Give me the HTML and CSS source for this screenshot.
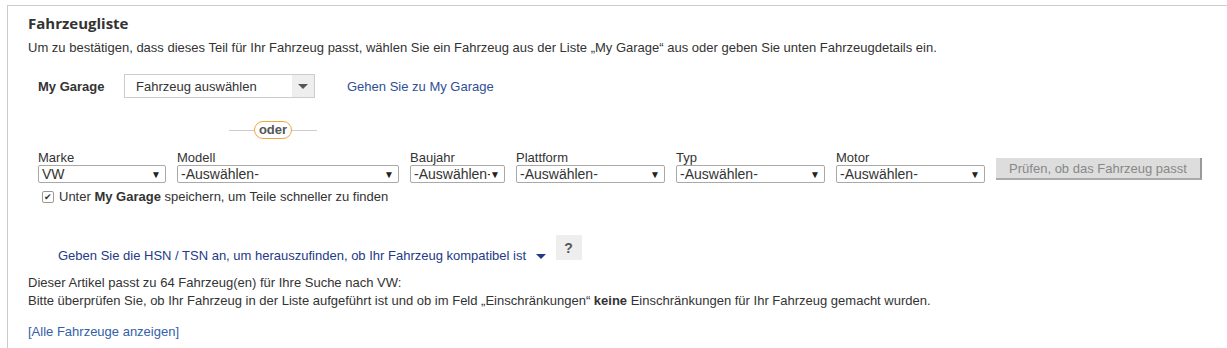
FILE: index.html
```html
<!DOCTYPE html>
<html lang="de">
<head>
    <meta charset="UTF-8">
    <title>Fahrzeugliste</title>
    <link rel="stylesheet" href="styles.css">
</head>
<body>
    <div class="panel">
        <h2 class="title">Fahrzeugliste</h2>
        <p class="desc">Um zu bestätigen, dass dieses Teil für Ihr Fahrzeug passt, wählen Sie ein Fahrzeug aus der Liste „My Garage“ aus oder geben Sie unten Fahrzeugdetails ein.</p>

        <div class="garage">
            <span class="garage-label">My Garage</span>
            <div class="garage-select">
                <span class="garage-text">Fahrzeug auswählen</span>
                <span class="garage-arrow"><span class="tri"></span></span>
            </div>
            <a class="garage-link" href="#">Gehen Sie zu My Garage</a>
        </div>

        <div class="oder">
            <span class="line"></span>
            <span class="pill">oder</span>
            <span class="line"></span>
        </div>

        <div class="fields">
            <div class="field">
                <label>Marke</label>
                <div class="sel w-marke"><span>VW</span><span class="arr">▼</span></div>
            </div>
            <div class="field">
                <label>Modell</label>
                <div class="sel w-modell"><span>-Auswählen-</span><span class="arr">▼</span></div>
            </div>
            <div class="field">
                <label>Baujahr</label>
                <div class="sel w-baujahr"><span class="clip">-Auswählen-</span><span class="arr">▼</span></div>
            </div>
            <div class="field">
                <label>Plattform</label>
                <div class="sel w-std"><span>-Auswählen-</span><span class="arr">▼</span></div>
            </div>
            <div class="field">
                <label>Typ</label>
                <div class="sel w-std"><span>-Auswählen-</span><span class="arr">▼</span></div>
            </div>
            <div class="field">
                <label>Motor</label>
                <div class="sel w-std"><span>-Auswählen-</span><span class="arr">▼</span></div>
            </div>
            <button class="check-btn" disabled>Prüfen, ob das Fahrzeug passt</button>
        </div>

        <div class="save">
            <span class="box">✔</span>
            <span>Unter <b>My Garage</b> speichern, um Teile schneller zu finden</span>
        </div>

        <div class="hsn">
            <a class="hsn-link" href="#">Geben Sie die HSN / TSN an, um herauszufinden, ob Ihr Fahrzeug kompatibel ist <span class="caret"></span></a>
            <span class="help">?</span>
        </div>

        <p class="result">Dieser Artikel passt zu 64 Fahrzeug(en) für Ihre Suche nach VW:<br>
        Bitte überprüfen Sie, ob Ihr Fahrzeug in der Liste aufgeführt ist und ob im Feld „Einschränkungen“ <b>keine</b> Einschränkungen für Ihr Fahrzeug gemacht wurden.</p>

        <a class="all-link" href="#">[Alle Fahrzeuge anzeigen]</a>
    </div>
</body>
</html>
```

FILE: styles.css
```css
body {
    margin: 0;
    font-family: Arial, "Liberation Sans", sans-serif;
    font-size: 13px;
    color: #333;
    background: #fff;
    overflow: hidden;
}

.panel {
    margin: 5px 0 0 7px;
    border-top: 1px solid #ccc;
    border-left: 1px solid #ccc;
    padding: 7px 0 0 20px;
    height: 335px;
}

.title {
    font-family: "Open Sans", sans-serif;
    font-size: 15px;
    font-weight: bold;
    line-height: 20px;
    margin: 0;
    color: #333;
}

.desc {
    margin: 7px 0 0;
    line-height: 16px;
}

.garage {
    display: flex;
    align-items: center;
    margin: 18px 0 0 10px;
    height: 24px;
}

.garage-label {
    font-weight: bold;
    width: 86px;
}

.garage-select {
    display: flex;
    width: 189px;
    height: 22px;
    border: 1px solid #ccc;
    align-items: center;
    justify-content: space-between;
}

.garage-text {
    padding-left: 11px;
}

.garage-arrow {
    width: 22px;
    height: 22px;
    background: #eee;
    display: flex;
    align-items: center;
    justify-content: center;
}

.tri {
    border-left: 5px solid transparent;
    border-right: 5px solid transparent;
    border-top: 5px solid #555;
}

.garage-link {
    margin-left: 32px;
    color: #2f4f96;
    text-decoration: none;
}

.oder {
    display: flex;
    align-items: center;
    margin: 23px 0 0 201px;
    width: 88px;
}

.line {
    flex: 1;
    border-top: 1px solid #ccc;
}

.pill {
    border: 1px solid #f0a540;
    border-radius: 9px;
    padding: 0 4px;
    line-height: 16px;
    font-weight: bold;
    color: #555;
}

.fields {
    display: flex;
    align-items: flex-end;
    gap: 11px;
    margin: 12px 0 0 10px;
}

.field {
    display: flex;
    flex-direction: column;
}

.field label {
    line-height: 14px;
}

.sel {
    display: flex;
    align-items: center;
    justify-content: space-between;
    height: 16px;
    border: 1px solid #a9a9a9;
    border-radius: 2px;
    padding: 0 3px;
    font-size: 14px;
    background: #fff;
    overflow: hidden;
}

.sel .clip {
    overflow: hidden;
    white-space: nowrap;
    width: 77px;
}

.arr {
    font-size: 10px;
    color: #222;
    padding-right: 1px;
}

.w-marke { width: 120px; }
.w-modell { width: 214px; }
.w-baujahr { width: 87px; }
.w-std { width: 141px; }

.check-btn {
    width: 206px;
    height: 22px;
    margin-bottom: 3px;
    background: #ddd;
    color: #888;
    font-family: Arial, "Liberation Sans", sans-serif;
    font-size: 13px;
    border: none;
    border-right: 2px solid #999;
    border-bottom: 2px solid #aaa;
    padding: 0;
}

.save {
    display: flex;
    align-items: center;
    gap: 5px;
    margin: 6px 0 0 14px;
    line-height: 16px;
}

.box {
    width: 10px;
    height: 10px;
    border: 1px solid #999;
    border-radius: 2px;
    font-size: 9px;
    line-height: 10px;
    text-align: center;
    color: #333;
}

.hsn {
    display: flex;
    align-items: flex-start;
    margin: 30px 0 0 30px;
}

.hsn-link {
    color: #243a86;
    text-decoration: none;
    line-height: 16px;
    margin-top: 13px;
}

.caret {
    display: inline-block;
    margin-left: 6px;
    border-left: 5px solid transparent;
    border-right: 5px solid transparent;
    border-top: 5px solid #243a86;
    vertical-align: middle;
}

.help {
    margin-left: 10px;
    width: 26px;
    height: 25px;
    background: #eee;
    font-weight: bold;
    font-size: 14px;
    color: #555;
    display: flex;
    align-items: center;
    justify-content: center;
}

.result {
    margin: 10px 0 0;
    line-height: 18px;
}

.all-link {
    display: block;
    margin-top: 14px;
    line-height: 16px;
    color: #3560a8;
    text-decoration: none;
}
```
